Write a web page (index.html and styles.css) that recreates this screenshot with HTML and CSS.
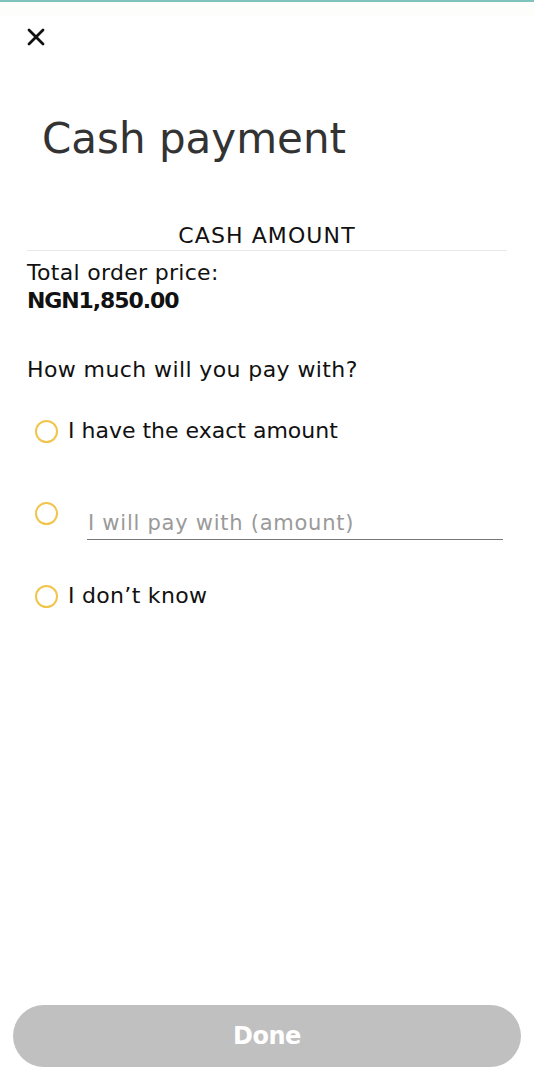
FILE: index.html
```html
<!DOCTYPE html>
<html lang="en">
<head>
    <meta charset="UTF-8">
    <meta name="viewport" content="width=device-width, initial-scale=1.0">
    <title>Cash payment</title>
    <link rel="stylesheet" href="styles.css">
</head>
<body>

    <div class="topline"></div>

    <div class="page">
        <button class="close" type="button" aria-label="Close">
            <svg width="18" height="18" viewBox="0 0 18 18">
                <path d="M2 2 L16 16 M16 2 L2 16" stroke="#111" stroke-width="2.8" stroke-linecap="round"/>
            </svg>
        </button>

        <h1 class="title">Cash payment</h1>

        <div class="section-head">CASH AMOUNT</div>

        <div class="total">
            <div class="total-label">Total order price:</div>
            <div class="total-value">NGN1,850.00</div>
        </div>

        <div class="question">How much will you pay with?</div>

        <div class="options">
            <label class="option option-exact">
                <span class="radio"></span>
                <span>I have the exact amount</span>
            </label>
            <label class="option option-input">
                <span class="radio"></span>
                <input type="text" class="amount" placeholder="I will pay with (amount)">
            </label>
            <label class="option option-unknown">
                <span class="radio"></span>
                <span>I don’t know</span>
            </label>
        </div>
    </div>

    <div class="footer">
        <button class="done" type="button">Done</button>
    </div>

</body>
</html>
```

FILE: styles.css
```css
body {
    font-family: "DejaVu Sans", sans-serif;
    margin: 0;
    height: 1080px;
    display: flex;
    flex-direction: column;
    color: #111;
    background: #fff;
}

.topline {
    height: 2px;
    background-color: #80c3bd;
    border-bottom: 14px solid #fdfefb;
}

.page {
    flex: 1;
    padding: 0 27px;
}

.close {
    display: block;
    margin: 12px 0 0 0;
    padding: 0;
    border: none;
    background: none;
    width: 18px;
    height: 18px;
}

.close svg {
    display: block;
}

.title {
    font-weight: 400;
    font-size: 42px;
    line-height: 56px;
    color: #333;
    margin: 65px 0 0 15px;
}

.section-head {
    margin-top: 55px;
    text-align: center;
    font-size: 22px;
    line-height: 28px;
    letter-spacing: 1.1px;
    border-bottom: 1px solid #e8e8e8;
}

.total {
    margin-top: 8px;
    font-size: 22px;
    line-height: 28px;
}

.total-label {
    letter-spacing: 0.3px;
}

.total-value {
    font-weight: 700;
    letter-spacing: -1.1px;
}

.question {
    margin-top: 41px;
    font-size: 22px;
    line-height: 28px;
    letter-spacing: 0.4px;
}

.options {
    display: flex;
    flex-direction: column;
    margin-top: 33px;
}

.option {
    display: flex;
    align-items: center;
    gap: 10px;
    font-size: 22px;
    line-height: 28px;
    padding-left: 8px;
}

.option-unknown span:last-child {
    letter-spacing: 0.3px;
}

.radio {
    width: 19px;
    height: 19px;
    border: 2px solid #f1c44c;
    border-radius: 50%;
    flex-shrink: 0;
}

.option-input {
    align-items: flex-start;
    gap: 29px;
    margin-top: 57px;
}

.option-unknown {
    margin-top: 42px;
}

.amount {
    flex: 1;
    min-width: 0;
    margin: 7px 4px 0 0;
    border: none;
    border-bottom: 1px solid #777;
    font-family: inherit;
    font-size: 21px;
    line-height: 28px;
    letter-spacing: 0.75px;
    height: 31px;
    padding: 0 0 2px 1px;
    outline: none;
    box-sizing: border-box;
}

.amount::placeholder {
    color: #9a9a9a;
}

.footer {
    padding: 0 13px 13px;
}

.done {
    display: block;
    width: 100%;
    height: 62px;
    border: none;
    border-radius: 31px;
    background-color: #c0c0c0;
    color: #fff;
    font-family: inherit;
    font-size: 24px;
    font-weight: 700;
    letter-spacing: -0.5px;
}
```
